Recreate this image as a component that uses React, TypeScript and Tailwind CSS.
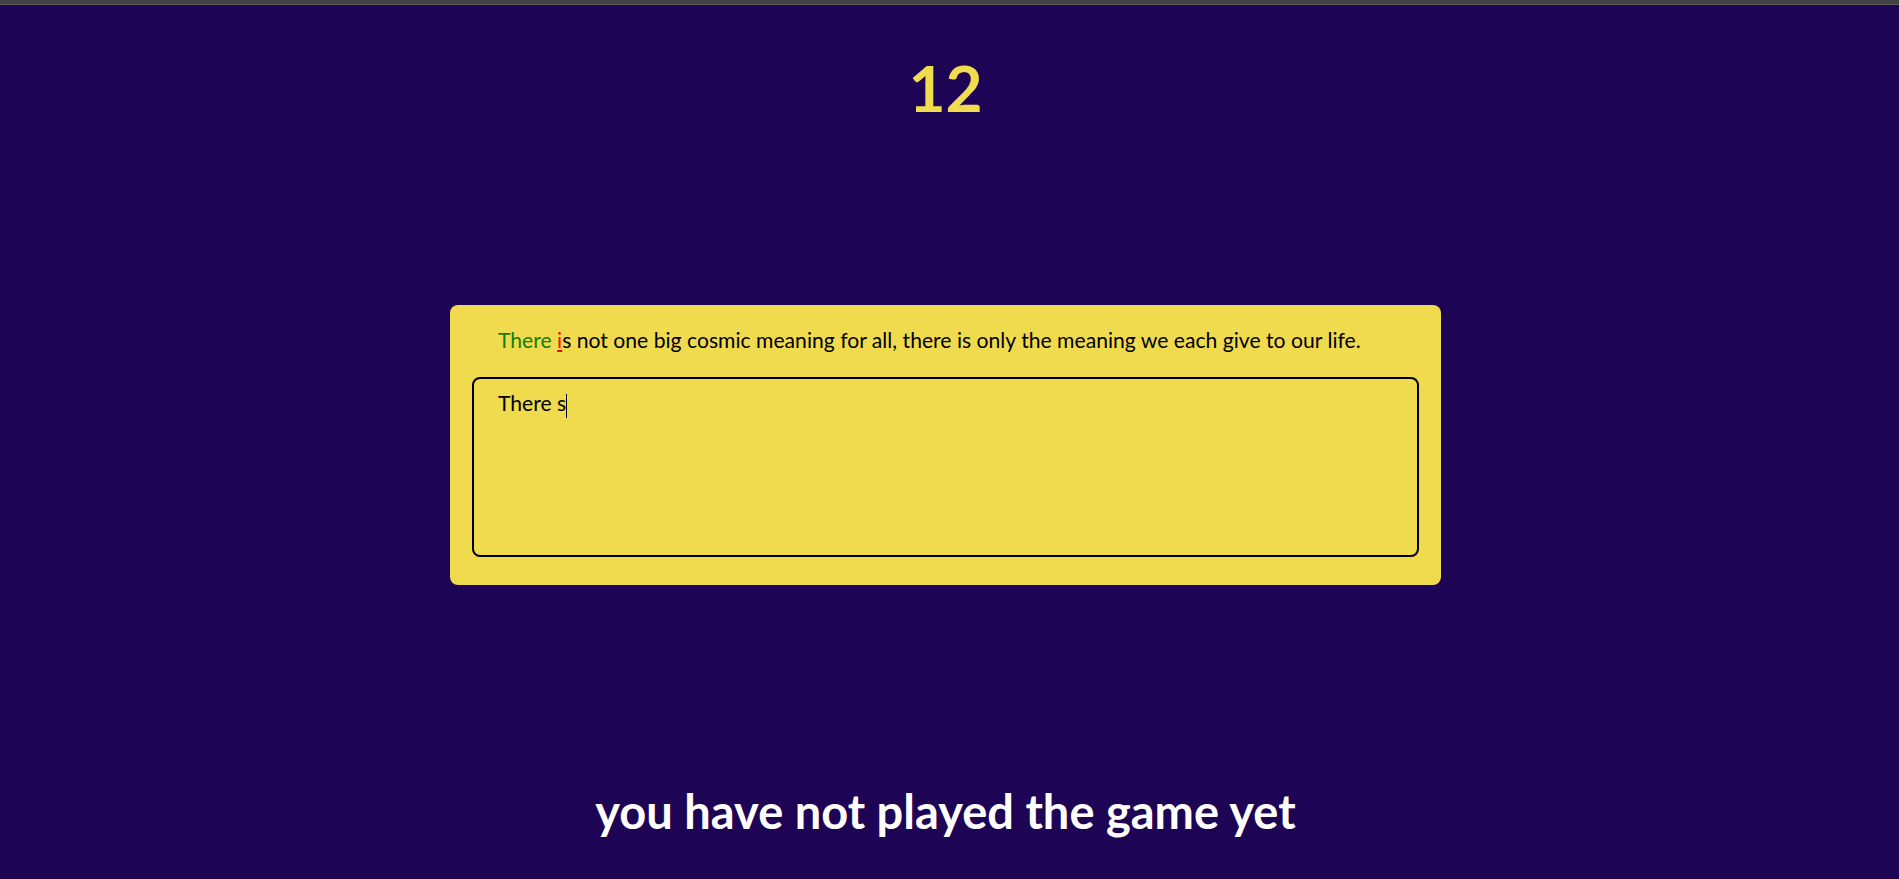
const quote =
  'There is not one big cosmic meaning for all, there is only the meaning we each give to our life.';

const typed = 'There s';

const App = () => {
  // split the quote into the part typed right, the current letter, and the rest
  const correct = 'There ';
  const current = quote.charAt(correct.length);
  const rest = quote.slice(correct.length + 1);

  return (
    <div
      className="min-h-screen flex flex-col bg-[#1e0454]"
      style={{ fontFamily: 'Lato, "Open Sans", sans-serif' }}
    >
      <div className="h-[4px] bg-[#424242] border-b border-[#5c5c5c] box-content" />

      <div className="flex flex-col items-center pr-[8px]">
        {/* Timer */}
        <h1 className="mt-[51px] text-[64px] leading-none font-bold text-[#f0dc4e]">
          12
        </h1>

        {/* Typing card */}
        <div className="mt-[185px] w-[991px] rounded-lg bg-[#f0da4d] px-[22px] pt-[20px] pb-[28px]">
          <p className="pl-[26px] text-[21.15px] leading-[30px] text-black">
            <span className="text-[#0f7f0a]">{correct}</span>
            <span className="text-[#ff0000] underline">{current}</span>
            <span>{rest}</span>
          </p>

          <div className="mt-[22px] h-[180px] rounded-lg border-2 border-black px-[24px] pt-[9px] text-[21.15px] leading-[30px] text-black">
            {typed}
            <span className="inline-block w-px h-[24px] bg-black align-middle" />
          </div>
        </div>

        {/* Result */}
        <p className="mt-[203px] text-[47px] leading-none font-bold text-white">
          you have not played the game yet
        </p>
      </div>
    </div>
  );
};

export default App;
